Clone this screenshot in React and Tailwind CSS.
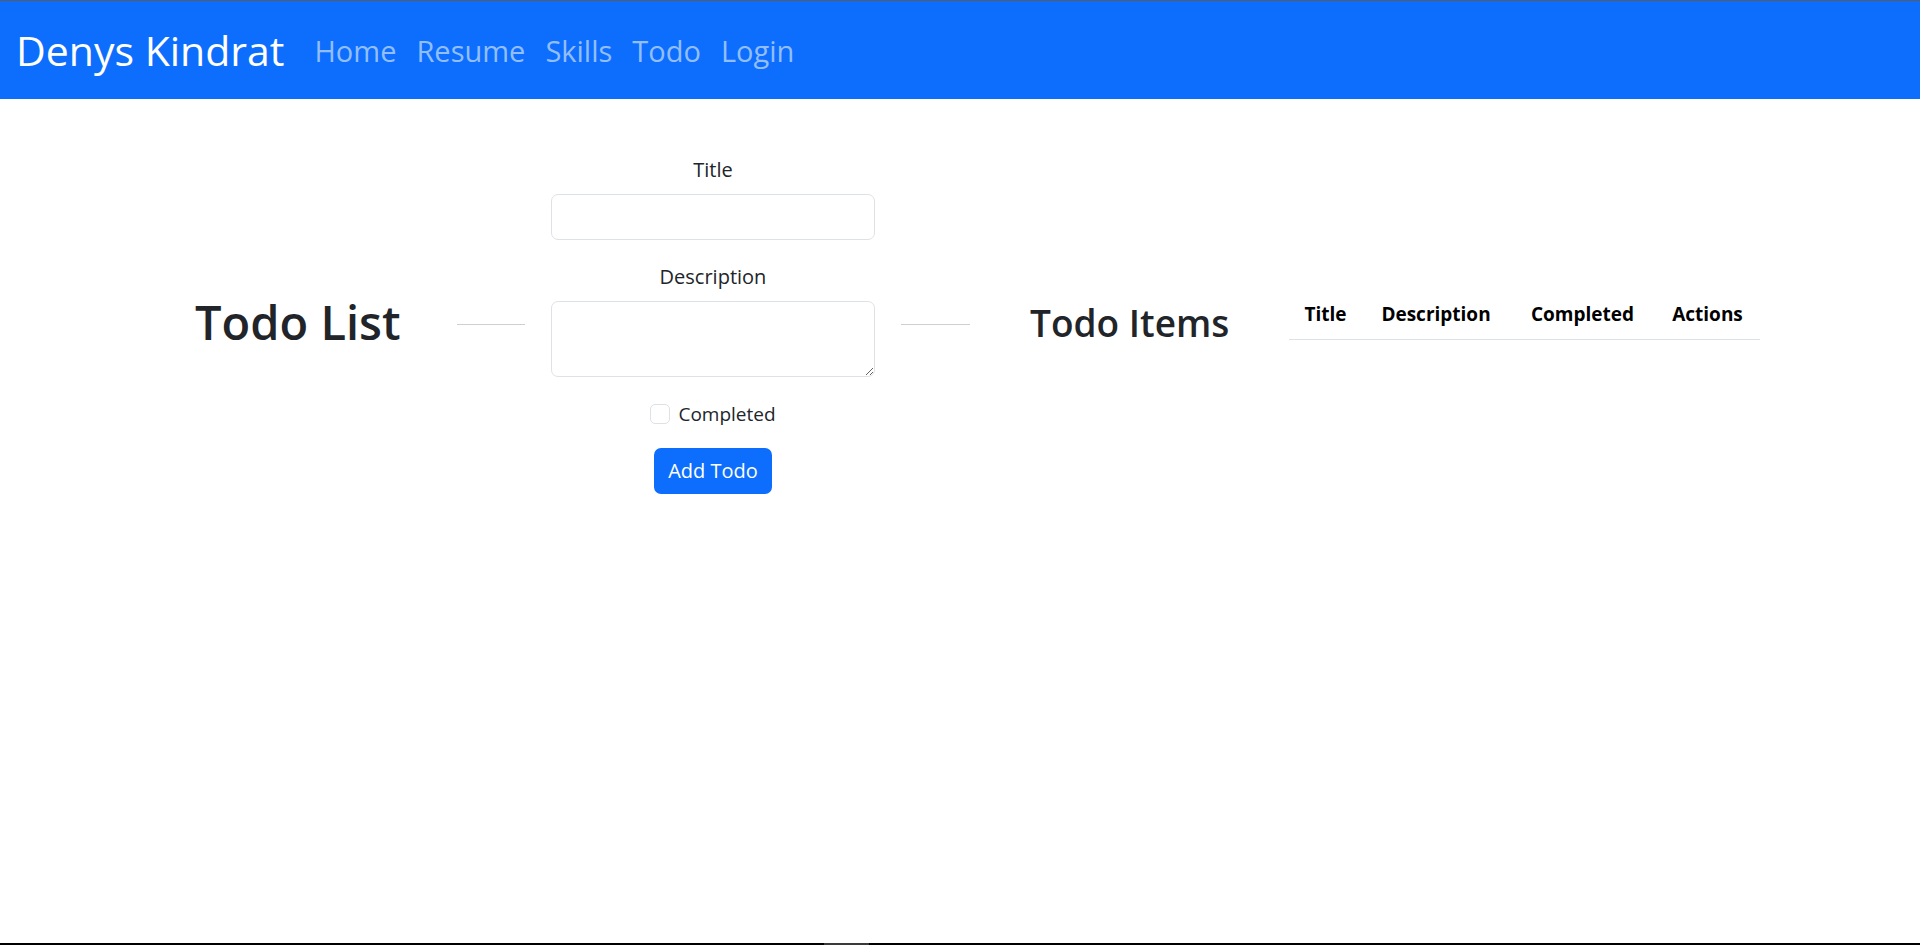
import { useState } from "react"

const NAV_LINKS = ["Home", "Resume", "Skills", "Todo", "Login"]

const Navbar = () => {
    return (
        <nav className="flex items-center h-[98px] bg-[#0d6efd] pl-4">
            <a className="text-white text-[41px] leading-none mr-[20px] whitespace-nowrap">Denys Kindrat</a>
            <div className="flex items-center">
                {NAV_LINKS.map((link, idx) => (
                    <a key={idx} className="px-[10px] text-[29px] leading-none text-[#92befe] whitespace-nowrap">
                        {link}
                    </a>
                ))}
            </div>
        </nav>
    )
}

const TodoForm = () => {
    const [ title, setTitle ] = useState("")
    const [ description, setDescription ] = useState("")
    const [ completed, setCompleted ] = useState(false)

    return (
        <form className="flex flex-col items-center w-[324px] ml-[26px] text-[#212529]"
              onSubmit={(e) => e.preventDefault()}>
            <label className="text-[20px] leading-[30px] mb-[9px]">Title</label>
            <input className="w-full h-[46px] border border-[#dee2e6] rounded-[7px] px-[15px] text-[20px] outline-none"
                   value={title}
                   onChange={(e) => setTitle(e.target.value)}
            />
            <label className="text-[20px] leading-[30px] mt-[22px] mb-[9px]">Description</label>
            <textarea className="w-full h-[76px] border border-[#dee2e6] rounded-[7px] px-[15px] py-[7px] text-[20px] outline-none"
                      value={description}
                      onChange={(e) => setDescription(e.target.value)}
            />
            <div className="flex items-center gap-[8px] mt-[22px] h-[30px]">
                <input type="checkbox"
                       className="appearance-none w-[20px] h-[20px] border border-[#dee2e6] rounded-[5px] bg-white"
                       checked={completed}
                       onChange={(e) => setCompleted(e.target.checked)}
                />
                <span className="text-[19px]">Completed</span>
            </div>
            <button className="mt-[19px] w-[118px] h-[46px] rounded-[7px] bg-[#0d6efd] text-white text-[20px]">
                Add Todo
            </button>
        </form>
    )
}

const TodoTable = () => {
    return (
        <div className="ml-[61px] w-[471px] mb-[20px]">
            <table className="w-full border-collapse text-black">
                <thead>
                    <tr className="border-b border-[#dee2e6]">
                        <th className="w-[73px] h-[50px] text-center text-[19px] font-bold">Title</th>
                        <th className="w-[148px] h-[50px] text-center text-[19px] font-bold">Description</th>
                        <th className="w-[145px] h-[50px] text-center text-[19px] font-bold">Completed</th>
                        <th className="w-[105px] h-[50px] text-center text-[19px] font-bold">Actions</th>
                    </tr>
                </thead>
                <tbody></tbody>
            </table>
        </div>
    )
}

export default function App() {
    return (
        <div className="min-h-screen flex flex-col bg-white font-['Open_Sans',sans-serif]">
            <div className="h-px bg-[#5c5c5c]"></div>
            <Navbar />
            <main className="flex-1 pt-[56px]">
                <div className="flex items-center pl-[195px]">
                    <h1 className="w-[202px] mb-[4px] text-[47px] font-semibold text-[#212529] whitespace-nowrap">Todo List</h1>
                    <div className="ml-[60px] w-[68px] h-px bg-[#cfcfcf]"></div>
                    <TodoForm />
                    <div className="ml-[26px] w-[69px] h-px bg-[#cfcfcf]"></div>
                    <h2 className="ml-[60px] w-[198px] mb-[4px] text-[37px] font-semibold text-[#212529] whitespace-nowrap">Todo Items</h2>
                    <TodoTable />
                </div>
            </main>
            <div className="flex h-[2px] bg-black">
                <div className="ml-[824px] w-[45px] bg-[#3a3a3a]"></div>
            </div>
        </div>
    )
}
